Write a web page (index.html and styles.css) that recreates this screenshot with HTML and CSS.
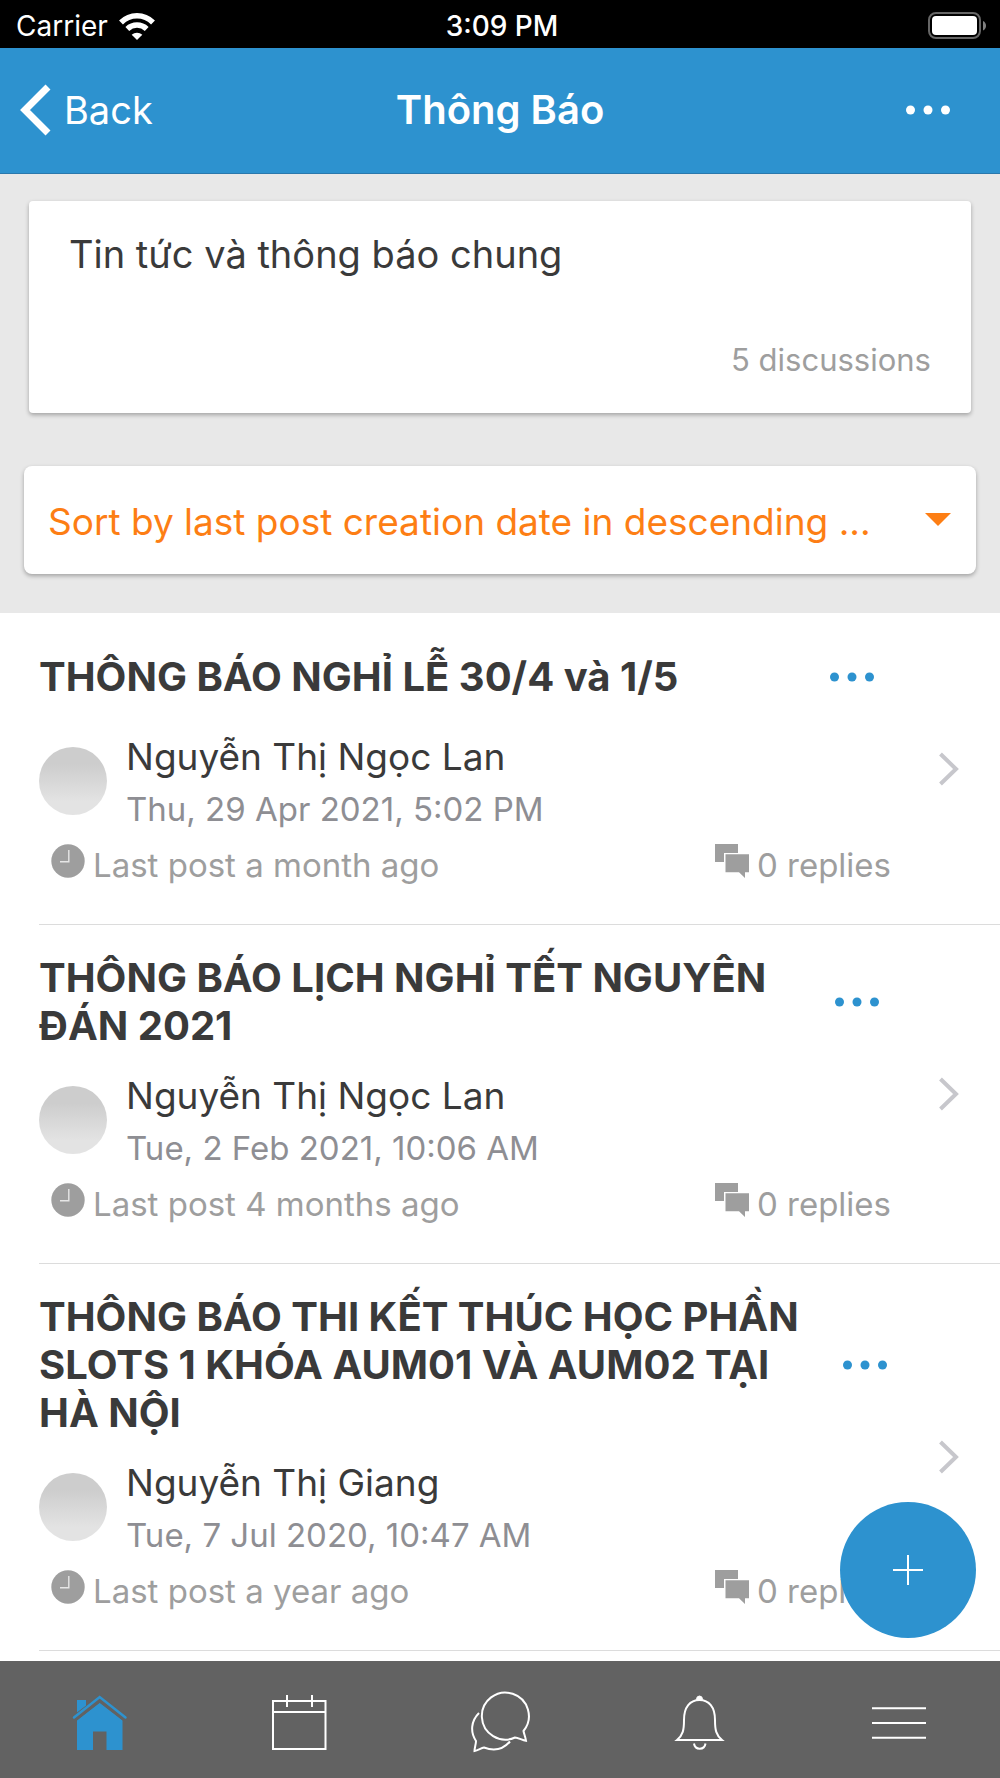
FILE: index.html
```
<!DOCTYPE html>
<html lang="vi">
<head>
    <meta charset="UTF-8">
    <meta name="viewport" content="width=device-width, initial-scale=1.0">
    <title>Thông Báo</title>
    <link rel="stylesheet" href="styles.css">
</head>
<body>
    <!-- shared icons -->
    <svg class="sprite" width="0" height="0" aria-hidden="true">
        <symbol id="dots" viewBox="0 0 44 10">
            <circle cx="4.5" cy="5" r="4.5"/>
            <circle cx="22" cy="5" r="4.5"/>
            <circle cx="39.5" cy="5" r="4.5"/>
        </symbol>
        <symbol id="clock" viewBox="0 0 34 34">
            <circle cx="17" cy="17" r="16.7"/>
            <path d="M17.8 6v11.7H9" fill="none" stroke="#e6e6e6" stroke-width="1.4"/>
        </symbol>
        <symbol id="chat" viewBox="0 0 34 34">
            <path d="M0 0h23v9H9v9H0z"/>
            <path d="M10.5 10.3H34v18h-4V34l-6-5.7H10.5z"/>
        </symbol>
        <symbol id="arrow" viewBox="0 0 20 34">
            <path d="M1.5 2 17 17 1.5 32" fill="none" stroke="#c7c7cc" stroke-width="4"/>
        </symbol>
    </svg>

    <div class="status-bar">
        <div class="carrier">
            Carrier
            <svg width="36" height="27" viewBox="0 0 36 27" fill="none" stroke="#fff" stroke-width="5.5">
                <path d="M2 9.5C11 .5 25 .5 34 9.5"/>
                <path d="M8.3 16c5.5-5.2 13.9-5.2 19.4 0"/>
                <path d="M18 27l-5.300-5.300c3-2.700 7.600-2.700 10.600 0z" fill="#fff" stroke="none"/>
            </svg>
        </div>
        <div class="time">3:09 PM</div>
        <div class="battery">
            <svg width="60" height="28" viewBox="0 0 60 28">
                <rect x="1" y="1" width="51" height="25" rx="7" fill="none" stroke="#666" stroke-width="2"/>
                <rect x="4" y="4" width="45" height="19" rx="4" fill="#fff"/>
                <path d="M55 9c4 1.5 4 8 0 9.500z" fill="#808080"/>
            </svg>
        </div>
    </div>

    <header class="toolbar">
        <button class="back">
            <svg width="32" height="52" viewBox="0 0 32 52"><path d="M28 3 5 26l23 23" fill="none" stroke="#fff" stroke-width="7"/></svg>
            Back
        </button>
        <h1>Thông Báo</h1>
        <button class="more" aria-label="Menu"><svg width="44" height="10"><use href="#dots"/></svg></button>
    </header>

    <main class="content">
        <section class="intro">
            <div class="card">
                <p>Tin tức và thông báo chung</p>
                <small>5 discussions</small>
            </div>
            <div class="sort">
                <select aria-label="Sort">
                    <option>Sort by last post creation date in descending ...</option>
                </select>
                <svg class="caret" width="26" height="13" viewBox="0 0 26 13"><path d="M0 0h26L13 13z" fill="#fd7e14"/></svg>
            </div>
        </section>

        <ul class="discussions">
            <li>
                <article>
                    <div class="heading">
                        <h2>THÔNG BÁO NGHỈ LỄ 30/4 và 1/5</h2>
                        <button class="options" aria-label="Options"><svg width="44" height="10"><use href="#dots"/></svg></button>
                    </div>
                    <div class="author">
                        <span class="avatar"></span>
                        <div>
                            <h3>Nguyễn Thị Ngọc Lan</h3>
                            <p>Thu, 29 Apr 2021, 5:02 PM</p>
                        </div>
                    </div>
                    <div class="info">
                        <span><svg width="34" height="34"><use href="#clock"/></svg>Last post a month ago</span>
                        <span><svg width="34" height="34"><use href="#chat"/></svg>0 replies</span>
                    </div>
                </article>
                <svg class="arrow" width="20" height="34"><use href="#arrow"/></svg>
            </li>
            <li>
                <article>
                    <div class="heading">
                        <h2>THÔNG BÁO LỊCH NGHỈ TẾT NGUYÊN ĐÁN 2021</h2>
                        <button class="options" aria-label="Options"><svg width="44" height="10"><use href="#dots"/></svg></button>
                    </div>
                    <div class="author">
                        <span class="avatar"></span>
                        <div>
                            <h3>Nguyễn Thị Ngọc Lan</h3>
                            <p>Tue, 2 Feb 2021, 10:06 AM</p>
                        </div>
                    </div>
                    <div class="info">
                        <span><svg width="34" height="34"><use href="#clock"/></svg>Last post 4 months ago</span>
                        <span><svg width="34" height="34"><use href="#chat"/></svg>0 replies</span>
                    </div>
                </article>
                <svg class="arrow" width="20" height="34"><use href="#arrow"/></svg>
            </li>
            <li>
                <article>
                    <div class="heading">
                        <h2>THÔNG BÁO THI KẾT THÚC HỌC PHẦN SLOTS 1 KHÓA AUM01 VÀ AUM02 TẠI HÀ NỘI</h2>
                        <button class="options" aria-label="Options"><svg width="44" height="10"><use href="#dots"/></svg></button>
                    </div>
                    <div class="author">
                        <span class="avatar"></span>
                        <div>
                            <h3>Nguyễn Thị Giang</h3>
                            <p>Tue, 7 Jul 2020, 10:47 AM</p>
                        </div>
                    </div>
                    <div class="info">
                        <span><svg width="34" height="34"><use href="#clock"/></svg>Last post a year ago</span>
                        <span><svg width="34" height="34"><use href="#chat"/></svg>0 replies</span>
                    </div>
                </article>
                <svg class="arrow" width="20" height="34"><use href="#arrow"/></svg>
            </li>
        </ul>

        <button class="fab" aria-label="Add discussion">
            <svg width="30" height="30" viewBox="0 0 30 30"><path d="M15 0v30M0 15h30" stroke="#fff" stroke-width="2"/></svg>
        </button>
    </main>

    <nav class="tabs">
        <a href="#" aria-label="Home">
            <svg width="56" height="60" viewBox="0 0 56 60">
                <path d="M5 7h9v9l-9 7z" fill="#2d92cf" stroke="none"/>
                <path d="M5 27.500 27.700 9.500 50.500 27.500V57h-16V38.500H21V57H5z" fill="#2d92cf" stroke="none"/>
                <path d="M2 25.500 27.700 6 53.500 25.500" fill="none" stroke="#626262" stroke-width="6"/>
                <path d="M2 24.500 27.700 4 53.500 24.500" fill="none" stroke="#2d92cf" stroke-width="2.500" stroke-linecap="round"/>
            </svg>
        </a>
        <a href="#" aria-label="Calendar">
            <svg width="56" height="60" viewBox="0 0 56 60">
                <path d="M1 8h52.500v48H1zM1 19h52.500M15 2v12M40 2v12"/>
            </svg>
        </a>
        <a href="#" aria-label="Messages">
            <svg width="60" height="60" viewBox="0 0 60 60">
                <path d="M53.500 38a23.500 23.500 0 1 0-8.500 6.500c3 0 7 2.500 11 3.300-.5-3.500-2-7-2.500-9.800z"/>
                <path d="M9 20C1 28 0 39 6 48c0 3-1.500 7-1.500 10 3.500-.500 6.500-3 9.500-3.500 10 4 19 2 26-6"/>
            </svg>
        </a>
        <a href="#" aria-label="Notifications">
            <svg width="56" height="60" viewBox="0 0 56 60">
                <path d="M5 47c6-5 7-10 7-20C12 14 18 7 27.500 7S43 14 43 27c0 10 1 15 7 20zM22 50.500c1 7 10.500 7 11.500 0"/>
                <path d="M24.500 6.500a3 3.500 0 0 1 6 0z" fill="#fff" stroke-width="1"/>
            </svg>
        </a>
        <a href="#" aria-label="More">
            <svg width="56" height="60" viewBox="0 0 56 60"><path d="M0 15.300h54M0 30h54M0 44.700h54"/></svg>
        </a>
    </nav>
</body>
</html>
```
FILE: styles.css
```
* {
    margin: 0;
    padding: 0;
}
body {
    display: flex;
    flex-direction: column;
    height: 100vh;
    overflow: hidden;
    background: white;
    color: #3a3a3a;
    font-family: Inter, sans-serif;
}
button {
    background: none;
    border: none;
    color: inherit;
    font: inherit;
    cursor: pointer;
}
svg {
    display: block;
    flex: none;
    overflow: visible;
}
.sprite {
    position: absolute;
}

/* status bar */
.status-bar {
    display: grid;
    grid-template-columns: 1fr auto 1fr;
    align-items: center;
    height: 48px;
    padding: 0 12px 0 16px;
    background: black;
    color: white;
    font-size: 28px;
    line-height: 52px;
}
.carrier {
    display: flex;
    align-items: center;
    gap: 11px;
}
.time {
    font-weight: 500;
}
.battery {
    justify-self: end;
}

/* toolbar */
.toolbar {
    display: grid;
    grid-template-columns: 1fr auto 1fr;
    align-items: center;
    height: 123px;
    padding: 0 20px 2px;
    border-bottom: 1px solid #2a78ac;
    background: #2d92cf;
    color: white;
    font-size: 38px;
}
.toolbar h1 {
    font-size: 40px;
    font-weight: 600;
}
.back {
    display: flex;
    align-items: center;
    gap: 12px;
}
.more {
    justify-self: end;
    margin-right: 30px;
    fill: white;
}

/* description and sort */
.content {
    flex: 1;
    min-height: 0;
    position: relative;
    overflow: hidden;
}
.intro {
    padding: 27px 24px 39px;
    background: #e8e8e8;
}
.card {
    display: flex;
    flex-direction: column;
    gap: 56px;
    margin: 0 5px 53px;
    padding: 27px 40px 29px;
    border-radius: 4px;
    background: white;
    box-shadow: 0 2px 4px rgba(0, 0, 0, 0.3);
}
.card p {
    font-size: 38px;
    line-height: 52px;
}
.card small {
    color: #9e9e9e;
    font-size: 31px;
    line-height: 48px;
    text-align: right;
}
.sort {
    position: relative;
    border-radius: 8px;
    background: white;
    box-shadow: 0 2px 4px rgba(0, 0, 0, 0.3);
}
.sort select {
    display: block;
    width: 100%;
    height: 108px;
    padding: 2px 70px 0 24px;
    border: none;
    background: none;
    color: #fd7e14;
    font-family: inherit;
    font-size: 37px;
    appearance: none;
}
.caret {
    position: absolute;
    top: 47px;
    right: 25px;
    pointer-events: none;
}

/* discussions */
.discussions {
    list-style: none;
}
.discussions li {
    display: flex;
    align-items: center;
    gap: 9px;
    margin-left: 39px;
    padding-right: 41px;
    border-bottom: 1px solid #dcdcdc;
}
.discussions article {
    flex: 1;
    min-width: 0;
    padding: 29px 0 33px;
}
.heading {
    display: flex;
    align-items: center;
    min-height: 69px;
}
.heading h2 {
    flex: 1 1 auto;
    font-size: 40px;
    font-weight: 700;
    line-height: 48px;
}
.options {
    display: flex;
    justify-content: center;
    flex: 0 1 48px;
    min-width: 0;
    padding: 0 54px;
    box-sizing: content-box;
    fill: #2d92cf;
}
.author {
    display: flex;
    align-items: center;
    gap: 19px;
    padding-top: 20px;
}
.author > div {
    min-width: 0;
}
.avatar {
    width: 68px;
    height: 68px;
    margin-bottom: 4px;
    border-radius: 50%;
    background: linear-gradient(#cdcdcd 25%, #e3e3e3 80%);
}
.author h3 {
    font-size: 37px;
    font-weight: 400;
    line-height: 52px;
}
.author p {
    color: #8e8e93;
    font-size: 33px;
    line-height: 52px;
}
.info {
    display: flex;
    justify-content: space-between;
    margin-top: 4px;
    padding: 0 39px 0 12px;
    color: #9e9e9e;
    fill: #9e9e9e;
    font-size: 33px;
    line-height: 52px;
}
.info span {
    display: flex;
    gap: 8px;
}
.info svg {
    margin-top: 5px;
}
.fab {
    display: flex;
    align-items: center;
    justify-content: center;
    position: absolute;
    right: 24px;
    bottom: 23px;
    width: 136px;
    height: 136px;
    border-radius: 50%;
    background: #2d92cf;
}

/* bottom tabs */
.tabs {
    display: flex;
    height: 117px;
    background: #626262;
}
.tabs a {
    flex: 1;
    display: flex;
    align-items: center;
    justify-content: center;
    padding-top: 7px;
    box-sizing: border-box;
}
.tabs svg {
    fill: none;
    stroke: white;
    stroke-width: 2;
}
```
